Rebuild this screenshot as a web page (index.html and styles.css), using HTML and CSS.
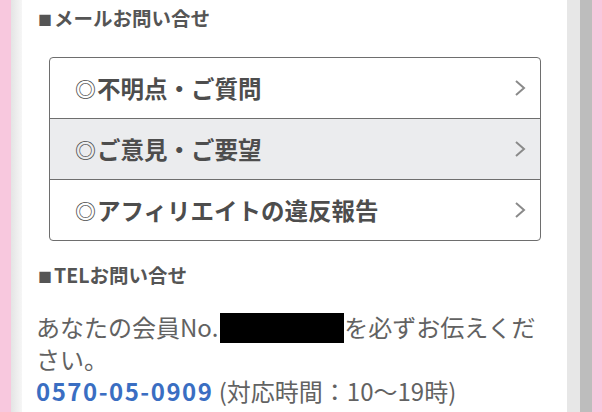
FILE: index.html
```html
<!DOCTYPE html>
<html lang="ja">
<head>
<meta charset="utf-8">
<link rel="stylesheet" href="styles.css">
</head>
<body>
<div class="frame">
  <div class="edge-pink"></div>
  <div class="edge-gray-left"></div>
  <main class="main">
    <h2 class="heading"><span class="sq">■</span>メールお問い合せ</h2>
    <ul class="menu">
      <li class="menu-item">
        <span class="menu-label"><span class="mark">◎</span>不明点・ご質問</span>
        <svg class="chev" width="12" height="18" viewBox="0 0 12 18"><polyline points="2,2 10,9 2,16" fill="none" stroke="#8a8a8a" stroke-width="2"/></svg>
      </li>
      <li class="menu-item active">
        <span class="menu-label"><span class="mark">◎</span>ご意見・ご要望</span>
        <svg class="chev" width="12" height="18" viewBox="0 0 12 18"><polyline points="2,2 10,9 2,16" fill="none" stroke="#8a8a8a" stroke-width="2"/></svg>
      </li>
      <li class="menu-item">
        <span class="menu-label"><span class="mark">◎</span>アフィリエイトの違反報告</span>
        <svg class="chev" width="12" height="18" viewBox="0 0 12 18"><polyline points="2,2 10,9 2,16" fill="none" stroke="#8a8a8a" stroke-width="2"/></svg>
      </li>
    </ul>
    <h2 class="heading heading-tel"><span class="sq">■</span>TELお問い合せ</h2>
    <p class="para">あなたの会員No.<span class="masked"></span>を必ずお伝えください。<br><a class="tel">0570-05-0909</a> (対応時間：10〜19時)</p>
  </main>
  <div class="edge-gray-r1"></div>
  <div class="edge-gray-r2"></div>
  <div class="edge-pink-r"></div>
</div>
</body>
</html>
```
FILE: styles.css
```css
html, body {
  margin: 0;
  padding: 0;
  background: #fff;
}
body {
  font-family: "Noto Sans CJK JP", "Noto Sans", sans-serif;
}
.frame {
  display: flex;
  width: 602px;
  height: 412px;
  overflow: hidden;
}
.edge-pink {
  width: 11px;
  background: #f8c8de;
}
.edge-gray-left {
  width: 11px;
  background: linear-gradient(to right, #e4e4e4, #f6f6f6);
}
.main {
  width: 545px;
  padding: 4px 22px 0 14px;
  box-sizing: border-box;
  background: #fff;
}
.edge-gray-r1 {
  width: 13px;
  background: #e7e7e7;
}
.edge-gray-r2 {
  width: 12px;
  background: #bdbdbd;
}
.edge-pink-r {
  width: 10px;
  background: #f8c8de;
}
.heading {
  margin: 0 0 0 2px;
  font-size: 19.5px;
  line-height: 28px;
  font-weight: bold;
  color: #555;
}
.sq {
  font-size: 14px;
  margin-right: 2px;
  vertical-align: 1px;
}
.menu {
  list-style: none;
  margin: 24px 4px 0 13px;
  padding: 0;
  border: 1px solid #6e6e6e;
  border-radius: 4px;
  overflow: hidden;
}
.menu-item {
  display: flex;
  align-items: center;
  justify-content: space-between;
  height: 60px;
  padding: 0 14px 0 25px;
  border-top: 1px solid #6e6e6e;
}
.menu-item:first-child {
  border-top: none;
}
.menu-item.active {
  background: #ebecee;
}
.menu-label {
  font-size: 23.5px;
  font-weight: bold;
  color: #4d4d4d;
}
.mark {
  font-size: 21px;
  font-weight: normal;
  margin-right: 1px;
  vertical-align: 1px;
}
.chev {
  display: block;
}
.heading-tel {
  margin-top: 20px;
}
.para {
  margin: 21px 0 0 0;
  font-size: 24px;
  line-height: 32px;
  color: #626262;
}
.masked {
  display: inline-block;
  width: 124px;
  height: 30px;
  background: #000;
  vertical-align: -6px;
  margin-left: 2px;
}
.tel {
  color: #3a6ec2;
  font-weight: bold;
  letter-spacing: 1.5px;
}
```
